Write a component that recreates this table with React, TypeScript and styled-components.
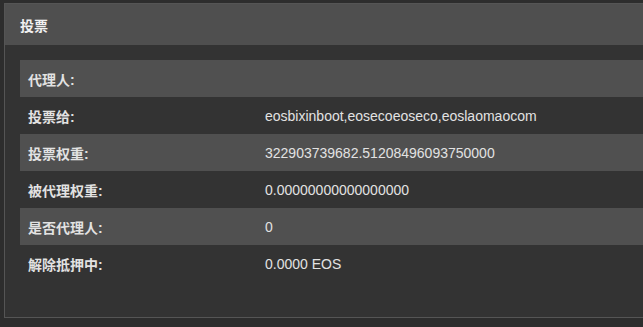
import React from 'react'
import styled, { createGlobalStyle } from 'styled-components'

const GlobalStyle = createGlobalStyle`
	html, body {
		margin: 0;
		background: #2d2d2d;
		overflow: hidden;
	}
	body {
		font-family: "Liberation Sans", "Noto Sans CJK SC", sans-serif;
		color: #e2e2e2;
	}
`

interface VoteRow {
	label: string
	value: string
}

const rows: VoteRow[] = [
	{ label: '代理人:', value: '' },
	{ label: '投票给:', value: 'eosbixinboot,eosecoeoseco,eoslaomaocom' },
	{ label: '投票权重:', value: '322903739682.51208496093750000' },
	{ label: '被代理权重:', value: '0.00000000000000000' },
	{ label: '是否代理人:', value: '0' },
	{ label: '解除抵押中:', value: '0.0000 EOS' },
]

const App: React.FC = () => {
	return (
		<StyledPage>
			<GlobalStyle />
			<StyledPanel>
				<StyledHeading>投票</StyledHeading>
				<StyledBody>
					<StyledTable>
						<tbody>
							{rows.map((row, i) => (
								<StyledRow key={row.label} striped={i % 2 === 0}>
									<StyledLabel>{row.label}</StyledLabel>
									<StyledValue>{row.value}</StyledValue>
								</StyledRow>
							))}
						</tbody>
					</StyledTable>
				</StyledBody>
			</StyledPanel>
		</StyledPage>
	)
}

// the panel runs on past the right side of the window, so no right border
const StyledPage = styled.div`
	padding: 3px 0 0 4px;
`

const StyledPanel = styled.div`
	border: 1px solid #555555;
	border-right: none;
	background: #333333;
`

const StyledHeading = styled.div`
	background: #4f4f4f;
	height: 41px;
	display: flex;
	align-items: center;
	padding-left: 15px;
	font-size: 14px;
	font-weight: 700;
	color: #f0f0f0;
`

const StyledBody = styled.div`
	padding: 15px 0 35px 15px;
`

const StyledTable = styled.table`
	border-collapse: collapse;
	width: 100%;
	font-size: 14px;
`

const StyledRow = styled.tr.withConfig({
	shouldForwardProp: (prop) => prop !== 'striped',
})<{ striped: boolean }>`
	height: 37px;
	background: ${(props) => (props.striped ? '#505050' : 'transparent')};
`

const StyledLabel = styled.td`
	width: 237px;
	padding: 0 0 0 8px;
	font-weight: 600;
	vertical-align: middle;
`

const StyledValue = styled.td`
	padding: 0;
	vertical-align: middle;
`

export default App
